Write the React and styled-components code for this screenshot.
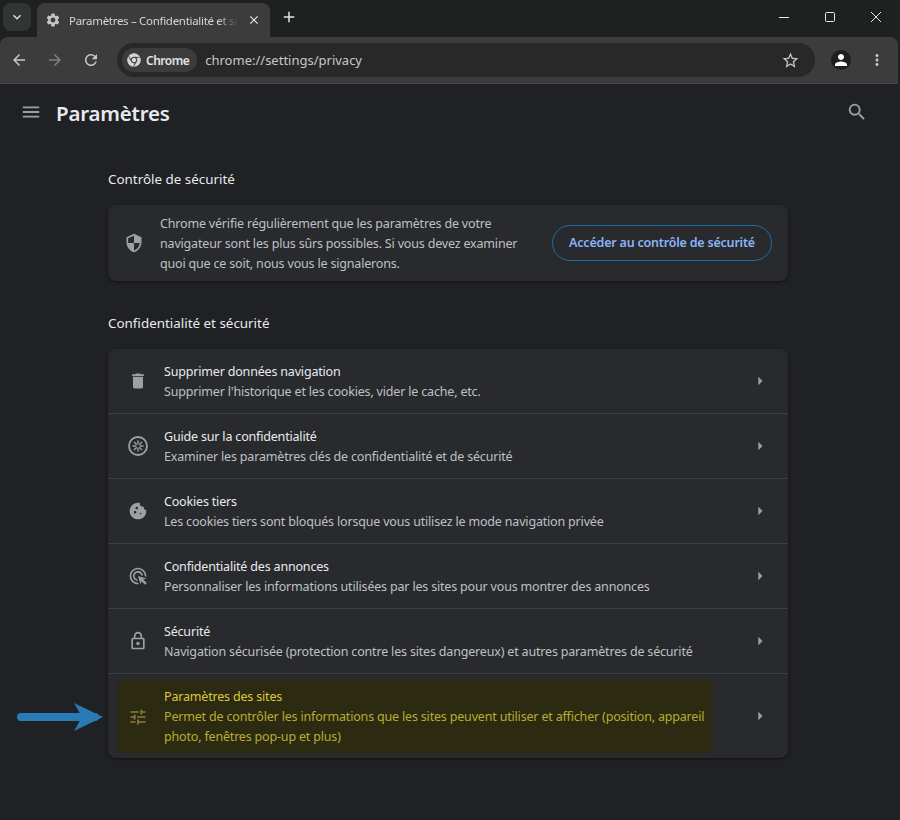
import React from "react";
import styled, { createGlobalStyle } from "styled-components";
import {
  MdSettings,
  MdClose,
  MdAdd,
  MdKeyboardArrowDown,
  MdArrowBack,
  MdArrowForward,
  MdRefresh,
  MdStarBorder,
  MdPerson,
  MdMoreVert,
  MdMenu,
  MdSearch,
  MdSecurity,
  MdDelete,
  MdCookie,
  MdOutlineAdsClick,
  MdOutlineLock,
  MdTune,
  MdArrowRight,
} from "react-icons/md";
import { FaChrome } from "react-icons/fa";

const GlobalStyle = createGlobalStyle`
  html, body {
    margin: 0;
    height: 820px;
    overflow: hidden;
    background: #202124;
    font-family: "Noto Sans", "Open Sans", sans-serif;
  }
`;

const Page = styled.div`
  position: relative;
  width: 900px;
  height: 820px;
  overflow: hidden;
  background: #202124;
`;

const TabStrip = styled.div`
  display: flex;
  align-items: flex-end;
  height: 37px;
  padding: 0 1px 0 3px;
  background: #1f2020;
`;

const TabSearch = styled.div`
  display: flex;
  align-items: center;
  justify-content: center;
  align-self: flex-start;
  width: 28px;
  height: 28px;
  margin-top: 3px;
  border-radius: 8px;
  background: #333435;
  color: #e3e3e3;
  font-size: 16px;
`;

const Tab = styled.div`
  display: flex;
  align-items: center;
  width: 233px;
  height: 34px;
  margin-left: 6px;
  padding: 0 9px 0 8px;
  box-sizing: border-box;
  border-radius: 8px 8px 0 0;
  background: #3c3c3c;
  color: #d6d6d6;
  font-size: 11.5px;
  svg {
    flex: none;
  }
`;

const TabTitle = styled.span`
  flex: 1;
  margin: 0 9px 0 8px;
  overflow: hidden;
  white-space: nowrap;
  letter-spacing: -0.3px;
  mask-image: linear-gradient(to right, #000 88%, transparent);
`;

const NewTab = styled.div`
  display: flex;
  align-items: center;
  align-self: flex-start;
  height: 28px;
  margin: 3px 0 0 10px;
  color: #e3e3e3;
  font-size: 18px;
`;

const WindowControls = styled.div`
  display: flex;
  align-self: flex-start;
  margin-left: auto;
  color: #e8e8e8;
`;

const WindowButton = styled.div`
  display: flex;
  align-items: center;
  justify-content: center;
  width: 46px;
  height: 34px;
`;

const Toolbar = styled.div`
  display: flex;
  align-items: center;
  height: 46px;
  margin-right: 2px;
  padding: 0 3px 0 1px;
  border-radius: 8px 8px 0 0;
  border-bottom: 1px solid #4a4a4a;
  background: #3c3c3c;
`;

const NavButton = styled.div`
  display: flex;
  align-items: center;
  justify-content: center;
  width: 36px;
  height: 34px;
  color: ${(p) => (p.$off ? "#7f7f7f" : "#c7c7c7")};
  font-size: 18px;
`;

const Omnibox = styled.div`
  display: flex;
  align-items: center;
  flex: 1;
  height: 34px;
  margin-left: 8px;
  padding: 0 15px 0 5px;
  border-radius: 17px;
  background: #282828;
  color: #c7c7c7;
`;

const Chip = styled.div`
  display: flex;
  align-items: center;
  gap: 5px;
  height: 24px;
  padding: 0 8px 0 5px;
  border-radius: 12px;
  background: #3c3c3c;
  color: #e3e3e3;
  font-size: 12px;
  font-weight: 600;
  letter-spacing: -0.5px;
`;

const Url = styled.span`
  flex: 1;
  margin-left: 8px;
  font-size: 13px;
`;

const Avatar = styled.div`
  display: flex;
  align-items: center;
  justify-content: center;
  width: 20px;
  height: 20px;
  margin: 0 8px 0 16px;
  border-radius: 50%;
  background: #1f1f1f;
  color: #fff;
  font-size: 18px;
`;

const PageHeader = styled.header`
  display: flex;
  align-items: center;
  height: 56px;
  padding: 0 32px 0 20px;
  color: #9aa0a6;
`;

const PageTitle = styled.h1`
  flex: 1;
  margin: 1px 0 0 14px;
  color: #e8eaed;
  font-size: 20.5px;
  font-weight: 600;
  letter-spacing: -0.2px;
`;

const Main = styled.main`
  width: 680px;
  margin: 0 0 0 108px;
  padding-top: 29px;
`;

const SectionTitle = styled.h2`
  margin: 0 0 16px;
  color: #e8eaed;
  font-size: 13.4px;
  font-weight: 400;
  line-height: 20px;
`;

const Card = styled.section`
  margin-bottom: 32px;
  border-radius: 8px;
  background: #292a2d;
  box-shadow: 0 1px 3px rgba(0, 0, 0, 0.45);
`;

const SafetyRow = styled.div`
  display: flex;
  align-items: center;
  height: 76px;
  padding: 0 16px;
`;

const IconSlot = styled.div`
  display: flex;
  flex: none;
  align-items: center;
  justify-content: center;
  width: 20px;
  margin-right: 16px;
  color: ${(p) => (p.$tint ? "#8a7f38" : "#9aa0a6")};
  font-size: 20px;
`;

const SafetyText = styled.p`
  flex: 1;
  margin: 0;
  padding: 1px 28px 0 0;
  color: #bdc1c6;
  font-size: 12.5px;
  letter-spacing: -0.18px;
  line-height: 20px;
`;

const OutlineButton = styled.div`
  flex: none;
  width: 220px;
  height: 36px;
  box-sizing: border-box;
  border: 1px solid #1a6fa8;
  border-radius: 18px;
  color: #8ab4f8;
  font-size: 12.5px;
  font-weight: 600;
  letter-spacing: -0.2px;
  line-height: 34px;
  text-align: center;
`;

const Row = styled.div`
  display: flex;
  align-items: center;
  height: ${(p) => (p.$tall ? "84px" : "64px")};
  padding: 0 18px 0 10px;
  & + & {
    border-top: 1px solid #3f4043;
  }
`;

const RowBody = styled.div`
  display: flex;
  flex: 1;
  align-items: center;
  align-self: stretch;
  margin: ${(p) => (p.$mark ? "6px 37px 5px 0" : "0")};
  padding-left: 10px;
  background: ${(p) => (p.$mark ? "#2d2a12" : "transparent")};
`;

const RowText = styled.div`
  padding-top: 1px;
  letter-spacing: -0.18px;
`;

const RowTitle = styled.div`
  color: ${(p) => (p.$mark ? "#dcc93a" : "#e8eaed")};
  font-size: 12.5px;
  line-height: 20px;
`;

const RowSub = styled.div`
  color: ${(p) => (p.$mark ? "#b7ae30" : "#bdc1c6")};
  font-size: 12.5px;
  line-height: 20px;
`;

const Chevron = styled.div`
  display: flex;
  flex: none;
  color: #9aa0a6;
  font-size: 20px;
`;

const Annotation = styled.svg`
  position: absolute;
  left: 16px;
  top: 702px;
`;

function GuideIcon() {
  return (
    <svg width="20" height="20" viewBox="0 0 20 20" fill="none" stroke="currentColor">
      <circle cx="10" cy="10" r="9" strokeWidth="1.8" />
      <path
        d="M10 4.5v3.8M10 11.7v3.8M4.5 10h3.8M11.7 10h3.8M6.1 6.1l2.7 2.7M11.2 11.2l2.7 2.7M13.9 6.1l-2.7 2.7M8.8 11.2l-2.7 2.7"
        strokeWidth="1.4"
      />
    </svg>
  );
}

const rows = [
  {
    icon: <MdDelete />,
    title: "Supprimer données navigation",
    sub: "Supprimer l'historique et les cookies, vider le cache, etc.",
  },
  {
    icon: <GuideIcon />,
    title: "Guide sur la confidentialité",
    sub: "Examiner les paramètres clés de confidentialité et de sécurité",
  },
  {
    icon: <MdCookie />,
    title: "Cookies tiers",
    sub: "Les cookies tiers sont bloqués lorsque vous utilisez le mode navigation privée",
  },
  {
    icon: <MdOutlineAdsClick />,
    title: "Confidentialité des annonces",
    sub: "Personnaliser les informations utilisées par les sites pour vous montrer des annonces",
  },
  {
    icon: <MdOutlineLock />,
    title: "Sécurité",
    sub: "Navigation sécurisée (protection contre les sites dangereux) et autres paramètres de sécurité",
  },
  {
    icon: <MdTune />,
    title: "Paramètres des sites",
    sub: "Permet de contrôler les informations que les sites peuvent utiliser et afficher (position, appareil photo, fenêtres pop-up et plus)",
    mark: true,
  },
];

export default function App() {
  return (
    <Page>
      <GlobalStyle />
      <TabStrip>
        <TabSearch>
          <MdKeyboardArrowDown />
        </TabSearch>
        <Tab>
          <MdSettings size={16} color="#c7c7c7" />
          <TabTitle>Paramètres – Confidentialité et sécurité</TabTitle>
          <MdClose size={14} color="#e3e3e3" />
        </Tab>
        <NewTab>
          <MdAdd />
        </NewTab>
        <WindowControls>
          <WindowButton>
            <svg width="10" height="10" viewBox="0 0 10 10" stroke="currentColor">
              <path d="M0 5.5h10" />
            </svg>
          </WindowButton>
          <WindowButton>
            <svg width="10" height="10" viewBox="0 0 10 10" fill="none" stroke="currentColor">
              <rect x="0.5" y="0.5" width="9" height="9" rx="1" />
            </svg>
          </WindowButton>
          <WindowButton>
            <svg width="10" height="10" viewBox="0 0 10 10" stroke="currentColor">
              <path d="M0 0l10 10M10 0L0 10" />
            </svg>
          </WindowButton>
        </WindowControls>
      </TabStrip>

      <Toolbar>
        <NavButton>
          <MdArrowBack />
        </NavButton>
        <NavButton $off>
          <MdArrowForward />
        </NavButton>
        <NavButton>
          <MdRefresh />
        </NavButton>
        <Omnibox>
          <Chip>
            <FaChrome size={14} color="#d5d5d5" />
            Chrome
          </Chip>
          <Url>chrome://settings/privacy</Url>
          <MdStarBorder size={19} />
        </Omnibox>
        <Avatar>
          <MdPerson />
        </Avatar>
        <NavButton>
          <MdMoreVert />
        </NavButton>
      </Toolbar>

      <PageHeader>
        <MdMenu size={22} />
        <PageTitle>Paramètres</PageTitle>
        <MdSearch size={22} />
      </PageHeader>

      <Main>
        <SectionTitle>Contrôle de sécurité</SectionTitle>
        <Card>
          <SafetyRow>
            <IconSlot>
              <MdSecurity />
            </IconSlot>
            <SafetyText>
              Chrome vérifie régulièrement que les paramètres de votre navigateur sont les plus
              sûrs possibles. Si vous devez examiner quoi que ce soit, nous vous le signalerons.
            </SafetyText>
            <OutlineButton>Accéder au contrôle de sécurité</OutlineButton>
          </SafetyRow>
        </Card>

        <SectionTitle>Confidentialité et sécurité</SectionTitle>
        <Card>
          {rows.map((row) => (
            <Row key={row.title} $tall={row.mark}>
              <RowBody $mark={row.mark}>
                <IconSlot $tint={row.mark}>{row.icon}</IconSlot>
                <RowText>
                  <RowTitle $mark={row.mark}>{row.title}</RowTitle>
                  <RowSub $mark={row.mark}>{row.sub}</RowSub>
                </RowText>
              </RowBody>
              <Chevron>
                <MdArrowRight />
              </Chevron>
            </Row>
          ))}
        </Card>
      </Main>

      <Annotation width="90" height="30" viewBox="0 0 90 30">
        <path d="M5 15h74" stroke="#2a7ab5" strokeWidth="8" strokeLinecap="round" />
        <path d="M58 1l29 14-29 14 8-14z" fill="#2a7ab5" />
      </Annotation>
    </Page>
  );
}
